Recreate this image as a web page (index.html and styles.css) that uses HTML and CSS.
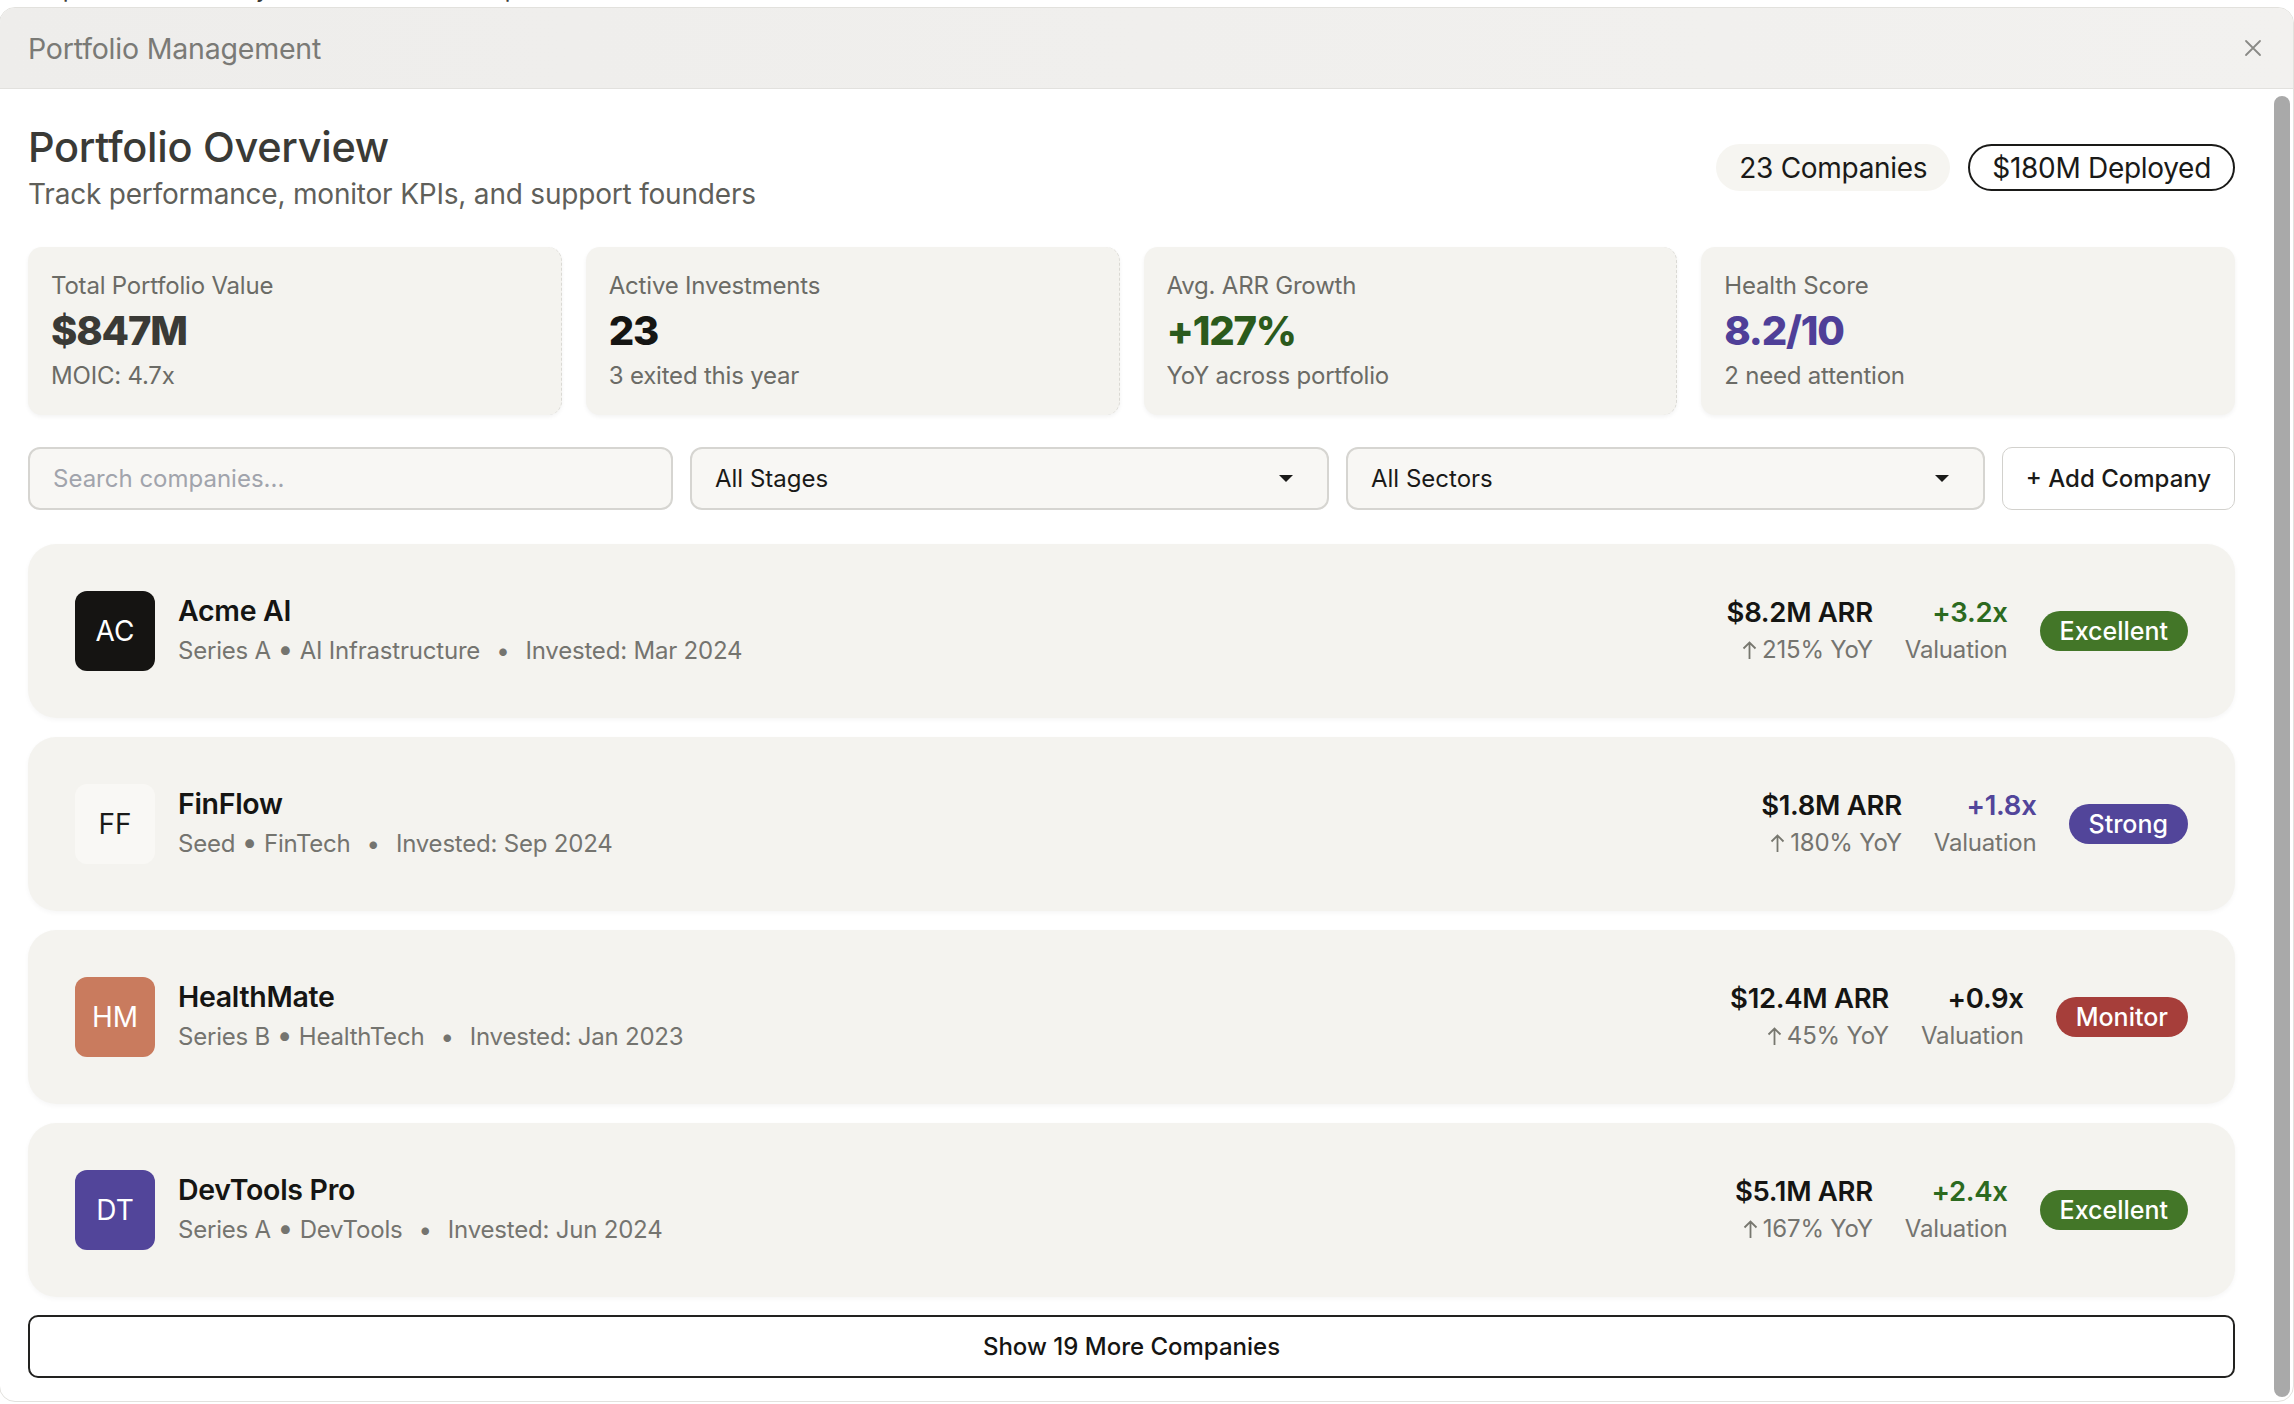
FILE: index.html
```html
<!DOCTYPE html>
<html lang="en">
<head>
<meta charset="utf-8">
<title>Portfolio Management</title>
<link rel="stylesheet" href="styles.css">
</head>
<body>
<div class="page-behind">Your portfolio summary is shown below for quick review</div>

<div class="modal">
  <header class="modal-header">
    <span class="modal-title">Portfolio Management</span>
    <button class="close-btn" aria-label="Close">
      <svg width="18" height="18" viewBox="0 0 18 18"><path d="M2 2 L16 16 M16 2 L2 16" stroke="#8a8a86" stroke-width="1.8" stroke-linecap="round" fill="none"/></svg>
    </button>
  </header>

  <div class="modal-body">
    <main class="content">
      <section class="overview-head">
        <div class="overview-text">
          <h1 class="overview-title">Portfolio Overview</h1>
          <p class="overview-sub">Track performance, monitor KPIs, and support founders</p>
        </div>
        <div class="pills">
          <span class="pill pill-soft">23 Companies</span>
          <span class="pill pill-outline">$180M Deployed</span>
        </div>
      </section>

      <section class="kpis">
        <div class="kpi-card kpi-dashed">
          <div class="kpi-label">Total Portfolio Value</div>
          <div class="kpi-value kpi-dark">$847M</div>
          <div class="kpi-sub">MOIC: 4.7x</div>
        </div>
        <div class="kpi-card kpi-dashed">
          <div class="kpi-label">Active Investments</div>
          <div class="kpi-value kpi-black">23</div>
          <div class="kpi-sub">3 exited this year</div>
        </div>
        <div class="kpi-card kpi-dashed">
          <div class="kpi-label">Avg. ARR Growth</div>
          <div class="kpi-value kpi-green">+127%</div>
          <div class="kpi-sub">YoY across portfolio</div>
        </div>
        <div class="kpi-card">
          <div class="kpi-label">Health Score</div>
          <div class="kpi-value kpi-purple">8.2/10</div>
          <div class="kpi-sub">2 need attention</div>
        </div>
      </section>

      <section class="filters">
        <input class="field search" type="text" placeholder="Search companies...">
        <div class="field select"><span>All Stages</span>
          <svg class="caret" width="16" height="9" viewBox="0 0 16 9"><path d="M1 1 L15 1 L8 8 Z" fill="#1a1a18"/></svg>
        </div>
        <div class="field select"><span>All Sectors</span>
          <svg class="caret" width="16" height="9" viewBox="0 0 16 9"><path d="M1 1 L15 1 L8 8 Z" fill="#1a1a18"/></svg>
        </div>
        <button class="add-btn">+ Add Company</button>
      </section>

      <section class="companies">
        <div class="company-row">
          <div class="logo logo-black">AC</div>
          <div class="company-info">
            <div class="company-name">Acme AI</div>
            <div class="company-meta">Series A <span class="dot">•</span> AI Infrastructure<span class="sep">•</span>Invested: Mar 2024</div>
          </div>
          <div class="company-stats">
            <div class="stat">
              <div class="stat-main">$8.2M ARR</div>
              <div class="stat-sub"><svg class="up" width="15" height="20" viewBox="0 0 15 20"><path d="M7.5 19 V2.5 M1.5 8.5 L7.5 2.5 L13.5 8.5" stroke="#77776f" stroke-width="1.8" fill="none"/></svg>215% YoY</div>
            </div>
            <div class="stat">
              <div class="stat-main val-green">+3.2x</div>
              <div class="stat-sub">Valuation</div>
            </div>
            <span class="badge badge-green">Excellent</span>
          </div>
        </div>

        <div class="company-row">
          <div class="logo logo-light">FF</div>
          <div class="company-info">
            <div class="company-name">FinFlow</div>
            <div class="company-meta">Seed <span class="dot">•</span> FinTech<span class="sep">•</span>Invested: Sep 2024</div>
          </div>
          <div class="company-stats">
            <div class="stat">
              <div class="stat-main">$1.8M ARR</div>
              <div class="stat-sub"><svg class="up" width="15" height="20" viewBox="0 0 15 20"><path d="M7.5 19 V2.5 M1.5 8.5 L7.5 2.5 L13.5 8.5" stroke="#77776f" stroke-width="1.8" fill="none"/></svg>180% YoY</div>
            </div>
            <div class="stat">
              <div class="stat-main val-purple">+1.8x</div>
              <div class="stat-sub">Valuation</div>
            </div>
            <span class="badge badge-purple">Strong</span>
          </div>
        </div>

        <div class="company-row">
          <div class="logo logo-terra">HM</div>
          <div class="company-info">
            <div class="company-name">HealthMate</div>
            <div class="company-meta">Series B <span class="dot">•</span> HealthTech<span class="sep">•</span>Invested: Jan 2023</div>
          </div>
          <div class="company-stats">
            <div class="stat">
              <div class="stat-main">$12.4M ARR</div>
              <div class="stat-sub"><svg class="up" width="15" height="20" viewBox="0 0 15 20"><path d="M7.5 19 V2.5 M1.5 8.5 L7.5 2.5 L13.5 8.5" stroke="#77776f" stroke-width="1.8" fill="none"/></svg>45% YoY</div>
            </div>
            <div class="stat">
              <div class="stat-main val-dark">+0.9x</div>
              <div class="stat-sub">Valuation</div>
            </div>
            <span class="badge badge-red">Monitor</span>
          </div>
        </div>

        <div class="company-row">
          <div class="logo logo-purple">DT</div>
          <div class="company-info">
            <div class="company-name">DevTools Pro</div>
            <div class="company-meta">Series A <span class="dot">•</span> DevTools<span class="sep">•</span>Invested: Jun 2024</div>
          </div>
          <div class="company-stats">
            <div class="stat">
              <div class="stat-main">$5.1M ARR</div>
              <div class="stat-sub"><svg class="up" width="15" height="20" viewBox="0 0 15 20"><path d="M7.5 19 V2.5 M1.5 8.5 L7.5 2.5 L13.5 8.5" stroke="#77776f" stroke-width="1.8" fill="none"/></svg>167% YoY</div>
            </div>
            <div class="stat">
              <div class="stat-main val-green">+2.4x</div>
              <div class="stat-sub">Valuation</div>
            </div>
            <span class="badge badge-green">Excellent</span>
          </div>
        </div>
      </section>

      <button class="show-more">Show 19 More Companies</button>
    </main>
    <div class="scrollbar"><div class="thumb"></div></div>
  </div>
</div>
</body>
</html>
```

FILE: styles.css
```css
* { box-sizing: border-box; }

html, body {
  margin: 0;
  padding: 0;
  height: 1404px;
  overflow: hidden;
  background: #ffffff;
  font-family: "Inter", "Noto Sans", sans-serif;
  color: #1a1a18;
}

.page-behind {
  margin-top: -25px;
  padding-left: 4px;
  font-size: 24px;
  line-height: 28px;
  color: #3a3a36;
  white-space: nowrap;
}

.modal {
  position: absolute;
  top: 7px;
  left: -1px;
  right: 0;
  bottom: 2px;
  background: #ffffff;
  border: 1px solid #e2e1dd;
  border-radius: 16px;
  overflow: hidden;
  display: flex;
  flex-direction: column;
}

.modal-header {
  height: 81px;
  flex: none;
  display: flex;
  align-items: center;
  justify-content: space-between;
  padding: 0 31px 0 28px;
  background: linear-gradient(90deg, #eeedeb 0%, #f2f1ef 100%);
  border-bottom: 1px solid #e2e1de;
}

.modal-title {
  font-size: 28.5px;
  color: #7a7a76;
  letter-spacing: -0.2px;
}

.close-btn {
  border: none;
  background: transparent;
  padding: 0;
  width: 18px;
  height: 18px;
  display: flex;
}

.modal-body {
  flex: 1;
  min-height: 0;
  display: flex;
}

.content {
  flex: 1;
  min-width: 0;
  overflow: hidden;
  padding: 34px 35px 28px 28px;
  display: flex;
  flex-direction: column;
}

.scrollbar {
  width: 23px;
  flex: none;
  padding: 7px 3px 4px 4px;
  display: flex;
}

.thumb {
  flex: 1;
  background: #a9a9a9;
  border-radius: 8px;
}

/* Overview header */
.overview-head {
  display: flex;
  align-items: center;
  justify-content: space-between;
}

.overview-title {
  margin: 0;
  font-size: 41.5px;
  line-height: 48px;
  font-weight: 500;
  color: #3a3a36;
  letter-spacing: -0.3px;
}

.overview-sub {
  margin: 5px 0 0;
  font-size: 28px;
  line-height: 36px;
  color: #5f5f5a;
  letter-spacing: -0.2px;
}

.pills {
  display: flex;
  gap: 18px;
  align-items: center;
}

.pill {
  height: 47px;
  border-radius: 24px;
  display: inline-flex;
  align-items: center;
  font-size: 28px;
  color: #1a1a18;
  letter-spacing: -0.3px;
}

.pill-soft { background: #f6f5f1; padding: 0 23px; }
.pill-outline { border: 2px solid #1a1a18; padding: 0 22px; }

/* KPI cards */
.kpis {
  margin-top: 35px;
  display: grid;
  grid-template-columns: repeat(4, 1fr);
  gap: 24px;
}

.kpi-card {
  height: 168px;
  background: #f4f3ef;
  border-radius: 14px;
  padding: 23px 23px;
  box-shadow: 0 2px 4px rgba(0, 0, 0, 0.05);
}

.kpi-dashed { border-right: 1.5px dashed #dad9d4; }

.kpi-label {
  font-size: 24px;
  line-height: 32px;
  color: #6b6b66;
  letter-spacing: -0.2px;
}

.kpi-value {
  font-size: 40px;
  line-height: 58px;
  font-weight: 800;
  letter-spacing: -1.2px;
}

.kpi-dark { color: #3a3a36; }
.kpi-black { color: #151513; }
.kpi-green { color: #2b5a1c; }
.kpi-purple { color: #4f3f98; }

.kpi-sub {
  font-size: 24px;
  line-height: 32px;
  color: #6b6b66;
  letter-spacing: -0.2px;
}

/* Filters */
.filters {
  margin-top: 32px;
  height: 63px;
  display: grid;
  grid-template-columns: 645px 1fr 1fr 233px;
  gap: 17px;
}

.field {
  min-width: 0;
  width: 100%;
  height: 63px;
  background: #f8f7f4;
  border: 2px solid #d6d5d1;
  border-radius: 12px;
  padding: 0 23px;
  font-family: inherit;
  font-size: 24px;
  color: #1a1a18;
}

.search { outline: none; }
.search::placeholder { color: #a1a4ac; }

.select {
  display: flex;
  align-items: center;
  justify-content: space-between;
  padding-right: 33px;
}

.add-btn {
  height: 63px;
  background: #ffffff;
  border: 1.5px solid #d2d1cd;
  border-radius: 10px;
  font-family: inherit;
  font-size: 24px;
  font-weight: 500;
  color: #1a1a18;
}

/* Companies */
.companies {
  margin-top: 34px;
  display: flex;
  flex-direction: column;
  gap: 19px;
}

.company-row {
  height: 174px;
  display: flex;
  align-items: center;
  padding: 0 47px;
  background: #f4f3ef;
  border-radius: 28px;
  box-shadow: 0 2px 5px rgba(0, 0, 0, 0.04);
}

.logo {
  width: 80px;
  height: 80px;
  flex: none;
  border-radius: 12px;
  display: flex;
  align-items: center;
  justify-content: center;
  font-size: 28px;
  color: #ffffff;
}

.logo-black { background: #151412; }
.logo-light { background: #f9f8f5; color: #1a1a18; }
.logo-terra { background: #c97b5e; }
.logo-purple { background: #52459a; }

.company-info {
  margin-left: 23px;
}

.company-name {
  font-size: 28.5px;
  line-height: 38px;
  font-weight: 600;
  color: #151513;
  letter-spacing: -0.3px;
}

.company-meta {
  font-size: 24px;
  line-height: 38px;
  color: #74746f;
  letter-spacing: -0.2px;
}

.dot { font-size: 28px; }

.sep { margin: 0 16px; }

.company-stats {
  margin-left: auto;
  display: flex;
  align-items: center;
  gap: 32px;
}

.stat { text-align: right; }

.stat-main {
  font-size: 27.5px;
  line-height: 38px;
  font-weight: 600;
  color: #151513;
  letter-spacing: -0.3px;
}

.stat-sub {
  font-size: 24px;
  line-height: 38px;
  color: #74746f;
  letter-spacing: -0.2px;
  display: flex;
  align-items: center;
  justify-content: flex-end;
}

.up { margin-right: 5px; }

.val-green { color: #2c6a1f; }
.val-purple { color: #52459a; }
.val-dark { color: #151513; }

.badge {
  height: 40px;
  padding: 0 20px;
  border-radius: 20px;
  display: inline-flex;
  align-items: center;
  font-size: 25px;
  font-weight: 500;
  color: #ffffff;
}

.badge-green { background: #437628; }
.badge-purple { background: #52459a; }
.badge-red { background: #a63e3a; }

.show-more {
  margin-top: 18px;
  height: 63px;
  flex: none;
  background: #ffffff;
  border: 2px solid #222220;
  border-radius: 10px;
  font-family: inherit;
  font-size: 24px;
  font-weight: 500;
  color: #151513;
}
```
